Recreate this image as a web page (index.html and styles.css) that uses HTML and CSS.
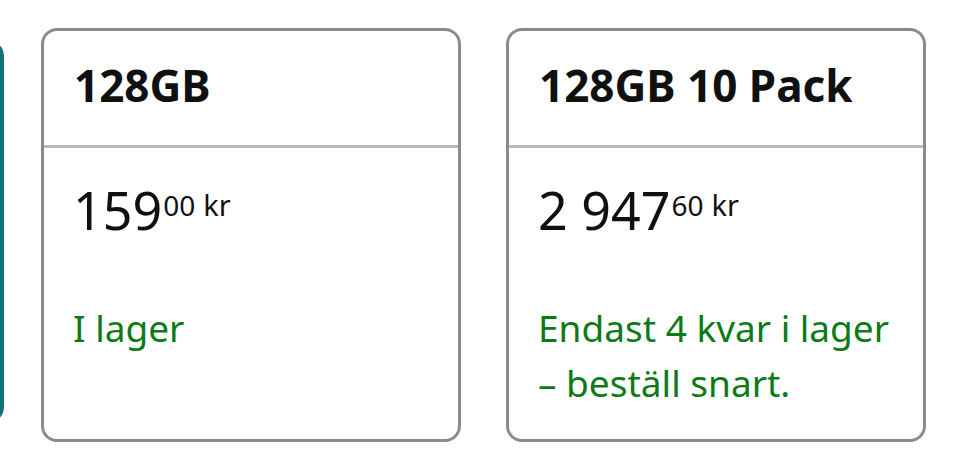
FILE: index.html
```html
<!DOCTYPE html>
<html lang="sv">
<head>
    <meta charset="UTF-8">
    <meta name="viewport" content="width=device-width, initial-scale=1.0">
    <title>Välj storlek</title>
    <link rel="stylesheet" href="styles.css">
</head>
<body>

<div class="swatches">
    <div class="swatch swatch-selected"></div>

    <div class="swatch">
        <div class="swatch-title">128GB</div>
        <div class="swatch-body">
            <div class="price">159<sup>00</sup><span class="currency">kr</span></div>
            <div class="stock">I lager</div>
        </div>
    </div>

    <div class="swatch">
        <div class="swatch-title">128GB 10 Pack</div>
        <div class="swatch-body">
            <div class="price">2 947<sup>60</sup><span class="currency">kr</span></div>
            <div class="stock">Endast 4 kvar i lager – beställ snart.</div>
        </div>
    </div>
</div>

</body>
</html>
```

FILE: styles.css
```css
body { margin: 0; background: #fff; font-family: "Noto Sans", "Open Sans", sans-serif; color: #0f1111; }
.swatches { display: flex; align-items: flex-start; gap: 45px; padding-top: 28px; margin-left: -416px; }
.swatch { flex: 0 0 420px; box-sizing: border-box; height: 414px; border: 3px solid #8b8b8b; border-radius: 16px; background: #fff; }
.swatch-selected { height: 383px; margin-top: 12px; margin-right: -8px; border: 4px solid #12707f; }
.swatch-title { box-sizing: border-box; height: 117px; padding: 24px 30px 0; font-size: 44px; font-weight: 700; line-height: 60px; border-bottom: 3px solid #b9b9b9; }
.swatch-body { padding: 32px 29px 0; }
.price { font-size: 52px; line-height: 60px; white-space: nowrap; }
.price sup, .currency { font-size: 28px; line-height: 0; vertical-align: 14px; }
.price sup { margin-left: 1px; }
.currency { margin-left: 8px; font-size: 29px; }
.stock { margin-top: 60px; font-size: 37px; line-height: 55px; color: #0b7a17; }
```
